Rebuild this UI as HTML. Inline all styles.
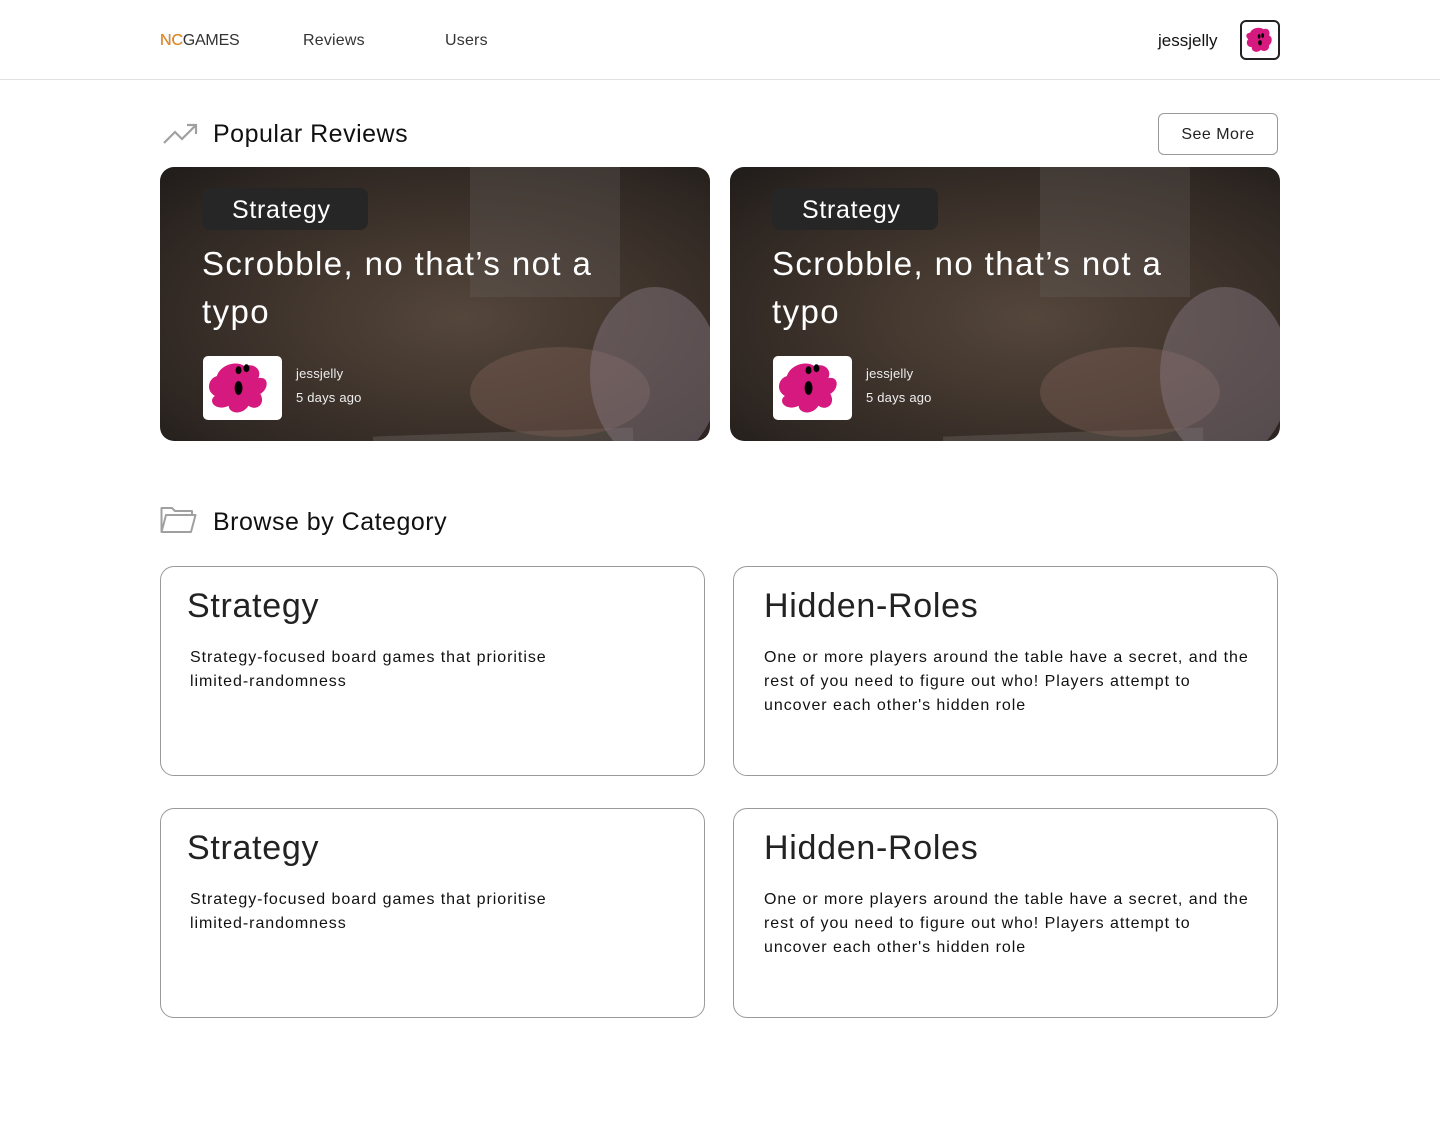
<!DOCTYPE html>
<html><head><meta charset="utf-8"><style>
*{margin:0;padding:0;box-sizing:border-box}
body{width:1440px;height:1148px;background:#fff;font-family:"Liberation Sans",sans-serif;color:#111;position:relative;overflow:hidden}
.a{position:absolute;white-space:nowrap}
.nav{position:absolute;left:0;top:0;width:1440px;height:80px;border-bottom:1px solid #e2e2e2}
.navt{font-size:16px;color:#333;letter-spacing:.2px;top:32px}
.h{font-size:25px;font-weight:500;color:#111;letter-spacing:.5px}
.card{position:absolute;top:167px;width:550px;height:274px;border-radius:14px;overflow:hidden;
background:radial-gradient(ellipse at 55% 55%,#54463b 0%,#3f342c 45%,#2c2521 80%,#201c1a 100%)}
.card .b1{position:absolute;left:215px;top:265px;width:260px;height:120px;background:#6d6662;opacity:.4;transform:rotate(-2deg)}
.card .b2{position:absolute;left:310px;top:0;width:150px;height:130px;background:#6b6560;opacity:.3}
.card .hand{position:absolute;border-radius:50%;background:#7a5e52;opacity:.45}
.tag{position:absolute;left:42px;top:21px;width:166px;height:42px;background:#262626;border-radius:8px;color:#fff;font-size:25px;line-height:44px;padding-left:30px;letter-spacing:.7px}
.title{position:absolute;left:42px;top:73px;color:#fff;font-size:33px;line-height:48px;letter-spacing:1.4px;white-space:nowrap}
.av{position:absolute;left:43px;top:189px;width:79px;height:64px;background:#fff;border-radius:5px;overflow:hidden}
.u{position:absolute;left:136px;color:#eee;font-size:13px;letter-spacing:.2px}
.cat{position:absolute;width:545px;height:210px;border:1px solid #9a9a9a;border-radius:14px}
.cat h2{position:absolute;left:26px;top:20px;font-size:34px;font-weight:400;color:#222;letter-spacing:.7px}
.cat p{position:absolute;left:29px;top:79px;font-size:16px;line-height:24px;color:#111;letter-spacing:.95px}
</style></head><body>
<div class="nav"></div>
<div class="a navt" style="left:160px;letter-spacing:0">NC<span style="color:#333"></span></div>
<div class="a navt" style="left:160px;letter-spacing:-.2px"><span style="color:#f08c1a">NC</span>GAMES</div>
<div class="a navt" style="left:303px">Reviews</div>
<div class="a navt" style="left:445px">Users</div>
<div class="a" style="left:1158px;top:31px;font-size:17px;color:#111">jessjelly</div>
<div class="a" style="left:1240px;top:20px;width:40px;height:40px;border:2px solid #222;border-radius:6px;background:#fff;overflow:hidden">
<svg width="36" height="36" viewBox="0 0 80 64"><path d="M18 16 C22 4 40 2 48 8 C58 4 64 14 60 22 C70 26 66 40 60 44 C62 54 50 60 42 54 C34 62 20 58 22 48 C10 48 8 36 14 30 C6 24 10 16 18 16Z" fill="#d6197f"/><ellipse cx="38" cy="24" rx="3" ry="5"/><ellipse cx="46" cy="22" rx="3" ry="5"/><ellipse cx="40" cy="38" rx="4" ry="6"/></svg></div>

<svg class="a" style="left:162px;top:122px" width="36" height="24" viewBox="0 0 36 24"><path d="M2 21 L13 10 L20 17 L33 4 M25 3 H34 V12" fill="none" stroke="#a0a0a0" stroke-width="2.2"/></svg>
<div class="a h" style="left:213px;top:120px">Popular Reviews</div>
<div class="a" style="left:1158px;top:113px;width:120px;height:42px;border:1px solid #999;border-radius:6px;font-size:16px;line-height:42px;text-align:center;color:#222;letter-spacing:.5px">See More</div>

<div class="card" style="left:160px"><div class="b1"></div><div class="b2"></div>
<div class="hand" style="left:310px;top:180px;width:180px;height:90px"></div><div class="hand" style="left:430px;top:120px;width:130px;height:174px;background:#8a7a86"></div>
<div class="tag">Strategy</div><div class="title">Scrobble, no that’s not a<br>typo</div>
<div class="av"><svg width="79" height="64" viewBox="0 0 80 64"><path d="M14 20 C18 8 34 4 42 10 C52 6 60 14 56 22 C68 20 66 34 58 38 C64 48 54 56 46 50 C40 60 26 58 26 50 C14 56 4 46 12 40 C2 34 6 22 14 20Z" fill="#d6197f"/><ellipse cx="36" cy="14" rx="3" ry="4"/><ellipse cx="44" cy="12" rx="3" ry="4"/><ellipse cx="36" cy="32" rx="4" ry="7"/></svg></div>
<div class="u" style="top:199px">jessjelly</div><div class="u" style="top:223px">5 days ago</div></div>

<div class="card" style="left:730px"><div class="b1"></div><div class="b2"></div>
<div class="hand" style="left:310px;top:180px;width:180px;height:90px"></div><div class="hand" style="left:430px;top:120px;width:130px;height:174px;background:#8a7a86"></div>
<div class="tag">Strategy</div><div class="title">Scrobble, no that’s not a<br>typo</div>
<div class="av"><svg width="79" height="64" viewBox="0 0 80 64"><path d="M14 20 C18 8 34 4 42 10 C52 6 60 14 56 22 C68 20 66 34 58 38 C64 48 54 56 46 50 C40 60 26 58 26 50 C14 56 4 46 12 40 C2 34 6 22 14 20Z" fill="#d6197f"/><ellipse cx="36" cy="14" rx="3" ry="4"/><ellipse cx="44" cy="12" rx="3" ry="4"/><ellipse cx="36" cy="32" rx="4" ry="7"/></svg></div>
<div class="u" style="top:199px">jessjelly</div><div class="u" style="top:223px">5 days ago</div></div>

<svg class="a" style="left:160px;top:506px" width="37" height="28" viewBox="0 0 37 28"><path d="M1.5 26 V2 H12 L15 5 H32 V9 M1.5 26 L6 9 H35.5 L31 26 Z" fill="none" stroke="#a0a0a0" stroke-width="2" stroke-linejoin="round"/></svg>
<div class="a h" style="left:213px;top:508px">Browse by Category</div>

<div class="cat" style="left:160px;top:566px"><h2>Strategy</h2><p>Strategy-focused board games that prioritise<br>limited-randomness</p></div>
<div class="cat" style="left:733px;top:566px"><h2 style="left:30px">Hidden-Roles</h2><p style="left:30px">One or more players around the table have a secret, and the<br>rest of you need to figure out who! Players attempt to<br>uncover each other's hidden role</p></div>
<div class="cat" style="left:160px;top:808px"><h2>Strategy</h2><p>Strategy-focused board games that prioritise<br>limited-randomness</p></div>
<div class="cat" style="left:733px;top:808px"><h2 style="left:30px">Hidden-Roles</h2><p style="left:30px">One or more players around the table have a secret, and the<br>rest of you need to figure out who! Players attempt to<br>uncover each other's hidden role</p></div>
</body></html>
